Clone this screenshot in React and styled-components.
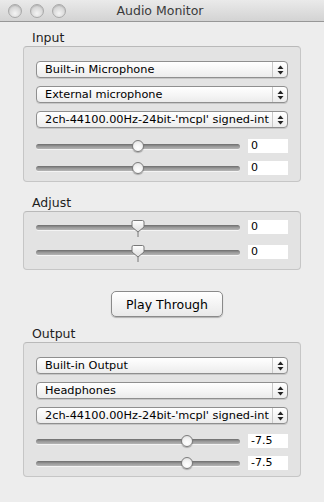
import React from "react";
import styled, { createGlobalStyle } from "styled-components";

const GlobalStyle = createGlobalStyle`
  html, body {
    margin: 0;
    padding: 0;
    background: #ededed;
  }
  body {
    font-family: "DejaVu Sans", "Liberation Sans", sans-serif;
  }
`;

const Window = styled.div`
  width: 324px;
  height: 502px;
  background: #ededed;
  overflow: hidden;
`;

const TitleBar = styled.div`
  height: 21px;
  border-bottom: 1px solid #979797;
  background: linear-gradient(#eaeaea, #d3d3d3);
  display: flex;
  align-items: center;
  position: relative;
`;

const Lights = styled.div`
  display: flex;
  gap: 8px;
  padding-left: 8px;
`;

const Light = styled.span`
  width: 12px;
  height: 12px;
  border-radius: 50%;
  border: 1px solid #a9a9a9;
  background: radial-gradient(circle at 50% 70%, #f4f4f4 0%, #d9d9d9 55%, #c4c4c4 100%);
  box-shadow: inset 0 1px 1px rgba(0, 0, 0, 0.12);
`;

const Title = styled.div`
  position: absolute;
  left: 0;
  right: 4px;
  top: 0;
  height: 21px;
  line-height: 21px;
  text-align: center;
  font-size: 12.5px;
  color: #3a3a3a;
`;

const Content = styled.div`
  padding: 8px 23px 0 23px;
  display: flex;
  flex-direction: column;
`;

const GroupLabel = styled.div`
  font-size: 12.5px;
  color: #1e1e1e;
  height: 16px;
  line-height: 16px;
  padding-left: 9px;
`;

const GroupBox = styled.div`
  width: 276px;
  border: 1px solid #c6c6c6;
  border-top-color: #b9b9b9;
  border-radius: 4px;
  background: #e3e3e3;
  padding: ${(p) => p.$pad};
  box-sizing: content-box;
  display: flex;
  flex-direction: column;
  gap: ${(p) => p.$gap || "8px"};
`;

const Rows = styled.div`
  display: flex;
  flex-direction: column;
  gap: ${(p) => p.$gap};
`;

const Popup = styled.div`
  margin: 0 12px;
  height: 15px;
  border: 1px solid #8f8f8f;
  border-radius: 4px;
  background: linear-gradient(#ffffff, #f6f6f6 50%, #ececec);
  box-shadow: 0 1px 0 rgba(0, 0, 0, 0.12);
  display: flex;
  align-items: center;
  font-size: 11.3px;
  color: #000;
`;

const PopupText = styled.span`
  flex: 1;
  padding-left: 8px;
  white-space: nowrap;
  overflow: hidden;
`;

const PopupArrows = styled.span`
  width: 14px;
  height: 15px;
  border-left: 1px solid #c9c9c9;
  display: flex;
  align-items: center;
  justify-content: center;
`;

const SliderRow = styled.div`
  display: flex;
  align-items: center;
  height: 14px;
  padding-left: 12px;
`;

const Track = styled.div`
  position: relative;
  width: 204px;
  height: 5px;
  border-radius: 3px;
  background: linear-gradient(#6d6d6d, #9a9a9a 50%, #b5b5b5);
  box-shadow: 0 1px 0 rgba(255, 255, 255, 0.6);
`;

const Knob = styled.span`
  position: absolute;
  top: 50%;
  width: 12px;
  height: 12px;
  margin-left: -6px;
  margin-top: -6px;
  border-radius: 50%;
  border: 1px solid #7c7c7c;
  box-sizing: border-box;
  background: radial-gradient(circle at 50% 70%, #ffffff 0%, #f3f3f3 50%, #d8d8d8 100%);
  box-shadow: 0 1px 1px rgba(0, 0, 0, 0.25);
`;

const PointerKnob = styled.svg`
  position: absolute;
  top: -5px;
  margin-left: -7px;
  overflow: visible;
`;

const Field = styled.div`
  margin-left: 8px;
  width: 37px;
  height: 14px;
  line-height: 14px;
  background: #fff;
  font-size: 11px;
  color: #000;
  padding-left: 3px;
`;

const ButtonRow = styled.div`
  display: flex;
  justify-content: center;
  padding: 21px 0 9px 10px;
`;

const Button = styled.button`
  width: 112px;
  height: 26px;
  border: 1px solid #8a8a8a;
  border-radius: 5px;
  background: linear-gradient(#ffffff, #f4f4f4 50%, #e9e9e9);
  box-shadow: 0 1px 1px rgba(0, 0, 0, 0.25);
  font-family: "DejaVu Sans", "Liberation Sans", sans-serif;
  font-size: 12.5px;
  color: #000;
  padding: 0;
`;

const Spacer = styled.div`
  height: ${(p) => p.$h};
`;

const Arrows = () => (
  <svg width="7" height="10" viewBox="0 0 7 10">
    <path d="M3.5 0.5 L6.5 4 L0.5 4 Z" fill="#222" />
    <path d="M3.5 9.5 L6.5 6 L0.5 6 Z" fill="#222" />
  </svg>
);

const Select = ({ children }) => (
  <Popup>
    <PopupText>{children}</PopupText>
    <PopupArrows>
      <Arrows />
    </PopupArrows>
  </Popup>
);

const Slider = ({ pos, value, pointer }) => (
  <SliderRow>
    <Track>
      {pointer ? (
        <PointerKnob
          width="14"
          height="18"
          viewBox="0 0 14 18"
          style={{ left: `${pos}%` }}
        >
          <defs>
            <linearGradient id="pk" x1="0" y1="0" x2="0" y2="1">
              <stop offset="0" stopColor="#ffffff" />
              <stop offset="1" stopColor="#dcdcdc" />
            </linearGradient>
          </defs>
          <path
            d="M2.5 0.5 H11.5 Q13 0.5 13 2 V7 L7 12 L1 7 V2 Q1 0.5 2.5 0.5 Z"
            fill="url(#pk)"
            stroke="#777"
          />
          <line x1="7" y1="12" x2="7" y2="17" stroke="#777" />
        </PointerKnob>
      ) : (
        <Knob style={{ left: `${pos}%` }} />
      )}
    </Track>
    <Field>{value}</Field>
  </SliderRow>
);

const sampleFormat = "2ch-44100.00Hz-24bit-'mcpl' signed-int";

export default function App() {
  return (
    <>
      <GlobalStyle />
      <Window>
        <TitleBar>
          <Lights>
            <Light />
            <Light />
            <Light />
          </Lights>
          <Title>Audio Monitor</Title>
        </TitleBar>
        <Content>
          <GroupLabel>Input</GroupLabel>
          <GroupBox $pad="14px 0 6px 0" $gap="11px">
            <Rows $gap="8px">
              <Select>Built-in Microphone</Select>
              <Select>External microphone</Select>
              <Select>{sampleFormat}</Select>
            </Rows>
            <Rows $gap="8px">
              <Slider pos={50} value="0" />
              <Slider pos={50} value="0" />
            </Rows>
          </GroupBox>
          <Spacer $h="13px" />
          <GroupLabel>Adjust</GroupLabel>
          <GroupBox $pad="8px 0 10px 0">
            <Rows $gap="11px">
              <Slider pos={50} value="0" pointer />
              <Slider pos={50} value="0" pointer />
            </Rows>
          </GroupBox>
          <ButtonRow>
            <Button>Play Through</Button>
          </ButtonRow>
          <GroupLabel>Output</GroupLabel>
          <GroupBox $pad="14px 0 6px 0" $gap="10px">
            <Rows $gap="8px">
              <Select>Built-in Output</Select>
              <Select>Headphones</Select>
              <Select>{sampleFormat}</Select>
            </Rows>
            <Rows $gap="8px">
              <Slider pos={74} value="-7.5" />
              <Slider pos={74} value="-7.5" />
            </Rows>
          </GroupBox>
        </Content>
      </Window>
    </>
  );
}
